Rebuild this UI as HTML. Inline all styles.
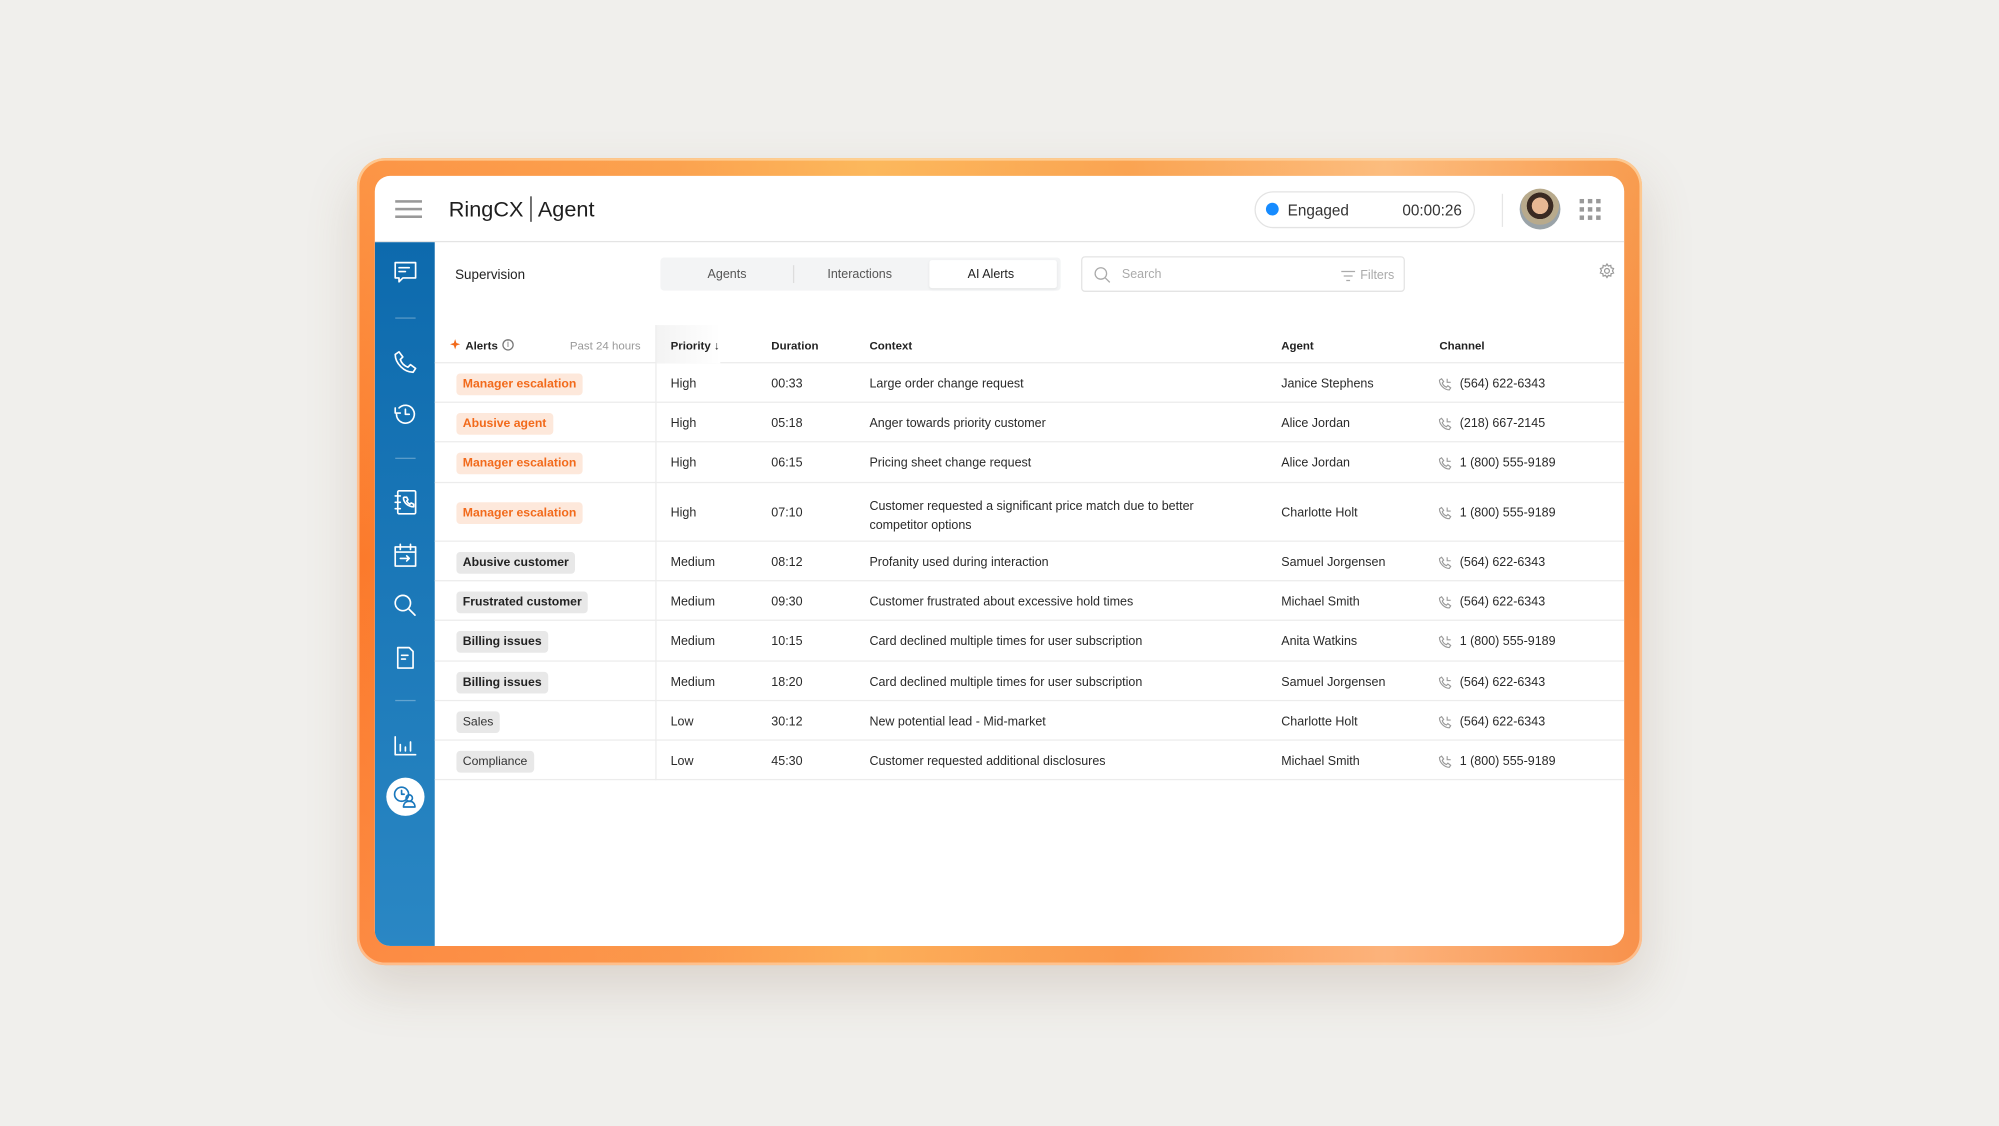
<!DOCTYPE html>
<html><head><meta charset="utf-8">
<style>
*{margin:0;padding:0;box-sizing:border-box}
html,body{width:1999px;height:1125px;overflow:hidden;background:#f0efec;font-family:"Liberation Sans",sans-serif;color:#222}
#w{position:absolute;left:0;top:0;width:1568px;height:883px;transform:scale(1.27487);transform-origin:0 0}
.a{position:absolute}
.frame{left:280px;top:124px;width:1008px;height:633px;border-radius:22px;
background:linear-gradient(90deg,#fb7a2c 0%,#f98f3a 25%,#fbb04e 40%,#f7913e 60%,#fbb782 80%,#f4853a 100%);
box-shadow:0 18px 40px rgba(120,90,60,.18),inset 0 0 0 2px rgba(255,230,200,.7)}
.frame:before{content:"";position:absolute;inset:0;border-radius:22px;background:linear-gradient(180deg,rgba(255,200,120,.35),rgba(255,120,40,.1) 50%,rgba(255,170,110,.35))}
.card{left:294px;top:138px;width:980px;height:604px;background:#fff;border-radius:12px;overflow:hidden}
.side{left:0;top:52px;width:47px;height:552px;background:linear-gradient(180deg,#0d6aad,#2a87c4)}
.hdr{left:0;top:0;width:980px;height:52px;border-bottom:1px solid #e4e4e4}
.t{font-size:9.8px;white-space:nowrap;color:#2a2a2a}
.h{font-size:9px;font-weight:bold;color:#222;white-space:nowrap}
.row{position:absolute;left:47px;width:933px;border-bottom:1px solid #ececec}
.chip{position:absolute;left:17px;height:17px;line-height:17px;padding:0 5px;border-radius:3px;font-size:9.6px;font-weight:bold;white-space:nowrap}
.o{background:#fde8db;color:#f26a1b}
.g{background:#e8e8e8;color:#222}
.gn{background:#e8e8e8;color:#333;font-weight:normal}
.ic svg{stroke:#fff;fill:none;stroke-width:1.3;stroke-linecap:round;stroke-linejoin:round}
</style></head><body>
<div id="w">
<div class="a frame"></div>
<div class="a card">
  <div class="a hdr">
    <div class="a" style="left:16px;top:19px;width:21px;height:1.5px;background:#999;box-shadow:0 6px 0 #999,0 12px 0 #999"></div>
    <div class="a" style="left:58px;top:16px;font-size:17px;color:#1e1e1e;white-space:nowrap">RingCX<span style="display:inline-block;width:1.3px;height:20px;background:#222;margin:0 5px;vertical-align:-4px"></span>Agent</div>
    <div class="a" style="left:690px;top:12px;width:173px;height:29px;border:1px solid #e3e3e3;border-radius:15px"></div>
    <div class="a" style="left:699px;top:21px;width:10px;height:10px;border-radius:50%;background:#168bff"></div>
    <div class="a" style="left:716px;top:20px;font-size:12px;color:#333">Engaged</div>
    <div class="a" style="left:806px;top:20px;font-size:12px;color:#333">00:00:26</div>
    <div class="a" style="left:884px;top:14px;width:1px;height:26px;background:#e6e6e6"></div>
    <div class="a" style="left:898px;top:10px;width:32px;height:32px;border-radius:50%;background:radial-gradient(circle at 50% 42%,#e7b894 0 26%,#3a2a22 27% 42%,#b8aa8c 43% 60%,#9aa3a8 61%)"></div>
    <svg class="a" style="left:945px;top:18px" width="17" height="17"><g fill="#999"><rect x="0" y="0" width="3.5" height="3.5"/><rect x="6.5" y="0" width="3.5" height="3.5"/><rect x="13" y="0" width="3.5" height="3.5"/><rect x="0" y="6.5" width="3.5" height="3.5"/><rect x="6.5" y="6.5" width="3.5" height="3.5"/><rect x="13" y="6.5" width="3.5" height="3.5"/><rect x="0" y="13" width="3.5" height="3.5"/><rect x="6.5" y="13" width="3.5" height="3.5"/><rect x="13" y="13" width="3.5" height="3.5"/></g></svg>
  </div>
  <div class="a side ic">
    <svg class="a" style="left:14px;top:14px" width="20" height="20" viewBox="0 0 20 20"><path d="M2 2h16v12H8l-3 3v-3H2z"/><path d="M5 6h8M5 9h5"/></svg>
    <div class="a" style="left:16px;top:59px;width:16px;height:1px;background:rgba(255,255,255,.3)"></div>
    <svg class="a" style="left:14px;top:84px" width="20" height="20" viewBox="0 0 20 20"><path d="M5 2l3 4-2 2c1 3 3 5 6 6l2-2 4 3-2 3C9 18 2 11 2 4z"/></svg>
    <svg class="a" style="left:14px;top:125px" width="20" height="20" viewBox="0 0 20 20"><path d="M3 10a7 7 0 1 0 2-5"/><path d="M2 5v4h4"/><path d="M10 6v4h3"/></svg>
    <div class="a" style="left:16px;top:169px;width:16px;height:1px;background:rgba(255,255,255,.3)"></div>
    <svg class="a" style="left:14px;top:194px" width="20" height="20" viewBox="0 0 20 20"><rect x="4" y="1" width="14" height="18" rx="1"/><path d="M2 5h4M2 10h4M2 15h4"/><path d="M9 6l2 0 1 2-1 1c.5 1 1.5 2 2.5 2.5l1-1 2 1v2c-4 0-8-3-8-7z"/></svg>
    <svg class="a" style="left:14px;top:235px" width="20" height="20" viewBox="0 0 20 20"><rect x="2" y="4" width="16" height="15"/><path d="M2 8h16M6 2v4M14 2v4M6 13h7M11 11l2 2-2 2"/></svg>
    <svg class="a" style="left:14px;top:275px" width="20" height="20" viewBox="0 0 20 20"><circle cx="8" cy="8" r="6"/><path d="M12.5 12.5l5 5"/></svg>
    <svg class="a" style="left:14px;top:316px" width="20" height="20" viewBox="0 0 20 20"><path d="M4 2h9l3 3v13H4z"/><path d="M7 8h5M7 11h3"/></svg>
    <div class="a" style="left:16px;top:359px;width:16px;height:1px;background:rgba(255,255,255,.3)"></div>
    <svg class="a" style="left:14px;top:384px" width="20" height="20" viewBox="0 0 20 20"><path d="M2 4v14h16M6 10v5M10 12v3M14 8v7"/></svg>
    <div class="a" style="left:9px;top:420px;width:30px;height:30px;border-radius:50%;background:#fff"></div>
    <svg class="a" style="left:14px;top:425px" width="20" height="20" viewBox="0 0 20 20"><g style="stroke:#1a78bd;fill:none;stroke-width:1.3"><circle cx="7" cy="8" r="5.5"/><path d="M7 5v3h2"/><circle cx="13" cy="11" r="2.5"/><path d="M8.5 18c0-3 2-4.5 4.5-4.5s4.5 1.5 4.5 4.5z"/></g></svg>
  </div>
  <div class="a" style="left:63px;top:72px;font-size:10.5px;color:#222">Supervision</div>
  <div class="a" style="left:224px;top:64px;width:314px;height:26px;background:#f3f4f5;border-radius:3px"></div>
  <div class="a" style="left:435px;top:66px;width:100px;height:22px;background:#fff;border-radius:2px;box-shadow:0 1px 2px rgba(0,0,0,.06)"></div>
  <div class="a" style="left:328px;top:70px;width:1px;height:14px;background:#ddd"></div>
  <div class="a t" style="left:261px;top:72px;color:#555">Agents</div>
  <div class="a t" style="left:355px;top:72px;color:#555">Interactions</div>
  <div class="a t" style="left:465px;top:72px;color:#222">AI Alerts</div>
  <div class="a" style="left:554px;top:63px;width:254px;height:28px;border:1px solid #e4e4e4;border-radius:3px"></div>
  <svg class="a" style="left:564px;top:71px" width="13" height="13" viewBox="0 0 13 13"><g fill="none" stroke="#aaa" stroke-width="1"><circle cx="5.5" cy="5.5" r="4.5"/><path d="M9 9l3.5 3.5"/></g></svg>
  <div class="a t" style="left:586px;top:72px;color:#aaa">Search</div>
  <svg class="a" style="left:758px;top:74px" width="11" height="9"><g stroke="#aaa" stroke-width="1"><path d="M0 1h11M2 4.5h7M4 8h3"/></g></svg>
  <div class="a t" style="left:773px;top:73px;color:#aaa">Filters</div>
  <svg class="a" style="left:960px;top:68px" width="13" height="13" viewBox="0 0 24 24"><g fill="none" stroke="#999" stroke-width="1.8"><circle cx="12" cy="12" r="3.5"/><path d="M12 2l2 3 3.5-1 .5 3.5 3.5 1-1.5 3.5 1.5 3-3.5 1-.5 3.5-3.5-1-2 3-2-3-3.5 1-.5-3.5-3.5-1 1.5-3.5L2.5 8.5l3.5-1L6.5 4 10 5z"/></g></svg>
  <div class="a" style="left:220px;top:117px;width:1px;height:357px;background:#ececec"></div>
  <div class="row" style="top:117px;height:30px"></div>
  <div class="a" style="left:221px;top:117px;width:50px;height:30px;background:linear-gradient(90deg,#f3f3f3,#fff)"></div>
  <svg class="a" style="left:59px;top:127px" width="10" height="10" viewBox="0 0 10 10"><path d="M4 1l1 3 3 1-3 1-1 3-1-3-3-1 3-1z" fill="#f26a1b"/></svg>
  <div class="a h" style="left:71px;top:128px">Alerts</div>
  <div class="a" style="left:100px;top:128px;width:9px;height:9px;border:1px solid #777;border-radius:50%;font-size:7px;line-height:7px;text-align:center;color:#777">i</div>
  <div class="a t" style="left:153px;top:128px;font-size:9px;color:#999">Past 24 hours</div>
  <div class="a h" style="left:232px;top:128px">Priority &#8595;</div>
  <div class="a h" style="left:311px;top:128px">Duration</div>
  <div class="a h" style="left:388px;top:128px">Context</div>
  <div class="a h" style="left:711px;top:128px">Agent</div>
  <div class="a h" style="left:835px;top:128px">Channel</div>
</div>
</div>
<script>
var R=[["Manager escalation","o","High","00:33","Large order change request","Janice Stephens","(564) 622-6343",285,316],
["Abusive agent","o","High","05:18","Anger towards priority customer","Alice Jordan","(218) 667-2145",316,347],
["Manager escalation","o","High","06:15","Pricing sheet change request","Alice Jordan","1 (800) 555-9189",347,379],
["Manager escalation","o","High","07:10","Customer requested a significant price match due to better<br>competitor options","Charlotte Holt","1 (800) 555-9189",379,425],
["Abusive customer","g","Medium","08:12","Profanity used during interaction","Samuel Jorgensen","(564) 622-6343",425,456],
["Frustrated customer","g","Medium","09:30","Customer frustrated about excessive hold times","Michael Smith","(564) 622-6343",456,487],
["Billing issues","g","Medium","10:15","Card declined multiple times for user subscription","Anita Watkins","1 (800) 555-9189",487,519],
["Billing issues","g","Medium","18:20","Card declined multiple times for user subscription","Samuel Jorgensen","(564) 622-6343",519,550],
["Sales","gn","Low","30:12","New potential lead - Mid-market","Charlotte Holt","(564) 622-6343",550,581],
["Compliance","gn","Low","45:30","Customer requested additional disclosures","Michael Smith","1 (800) 555-9189",581,612]];
var c=document.querySelector('.card'),h='';
R.forEach(function(r){var t=r[7]-138,ht=r[8]-r[7],m=t+ht/2;
h+='<div class="row" style="top:'+t+'px;height:'+ht+'px"></div>';
h+='<div class="chip '+r[1]+'" style="left:64px;top:'+(m-8)+'px">'+r[0]+'</div>';
var ty=m-5;
h+='<div class="a t" style="left:232px;top:'+ty+'px">'+r[2]+'</div>';
h+='<div class="a t" style="left:311px;top:'+ty+'px">'+r[3]+'</div>';
var two=r[4].indexOf('<br>')>0,cy=two?m-12:ty;
h+='<div class="a t" style="left:388px;top:'+cy+'px;line-height:15px;margin-top:'+(two?'0':'-2px')+'">'+r[4]+'</div>';
h+='<div class="a t" style="left:711px;top:'+ty+'px">'+r[5]+'</div>';
h+='<svg class="a" style="left:834px;top:'+(m-5)+'px" width="11" height="11" viewBox="0 0 20 20"><path d="M5 2l3 4-2 2c1 3 3 5 6 6l2-2 4 3-2 3C9 18 2 11 2 4z" fill="none" stroke="#999" stroke-width="1.6"/><path d="M13 2v5h5" fill="none" stroke="#999" stroke-width="1.6"/></svg>';
h+='<div class="a t" style="left:851px;top:'+ty+'px">'+r[6]+'</div>';});
c.insertAdjacentHTML('beforeend',h);
</script>
</body></html>
